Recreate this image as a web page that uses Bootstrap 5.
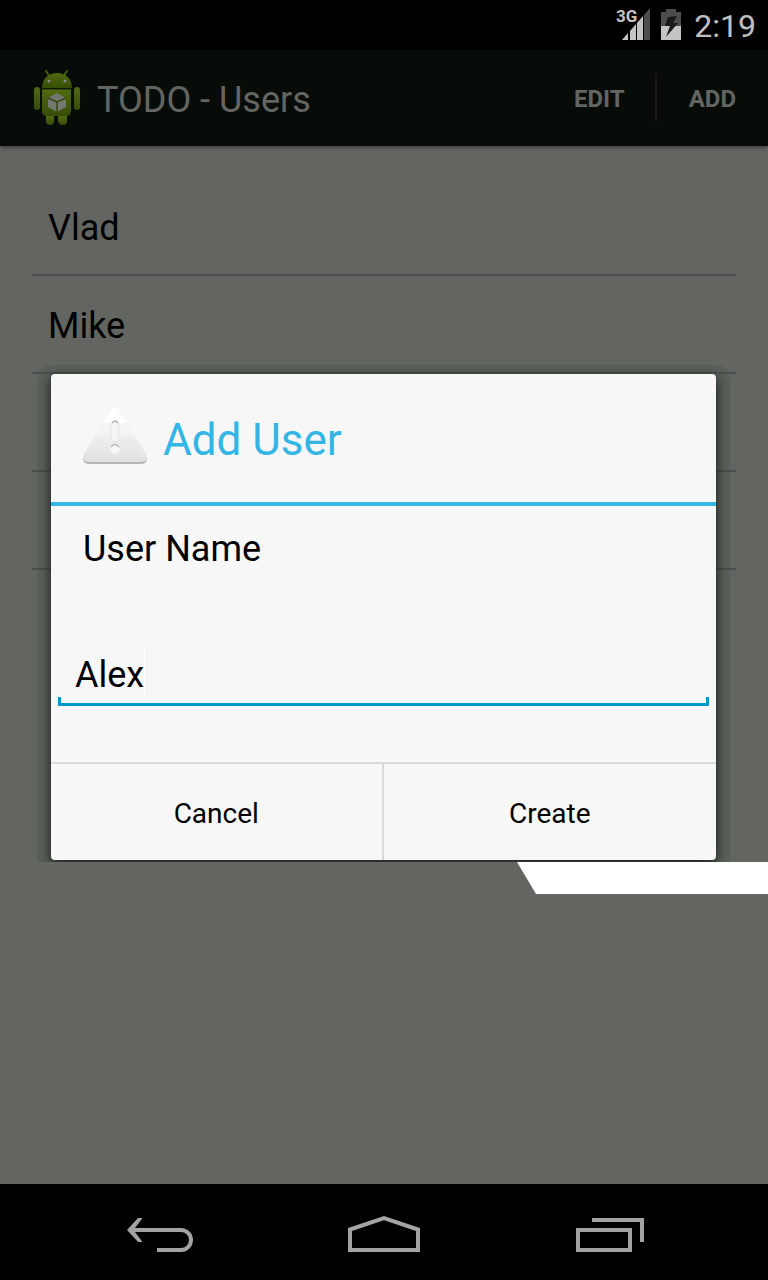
<!DOCTYPE html>
<html lang="en">
<head>
<meta charset="utf-8">
<meta name="viewport" content="width=device-width, initial-scale=1">
<title>TODO - Users</title>
<link href="https://cdn.jsdelivr.net/npm/bootstrap@5.3.0/dist/css/bootstrap.min.css" rel="stylesheet">
<style>
body { font-family: Roboto, "Liberation Sans", sans-serif; background: #636561; color: #000; }
.status-bar { background: #000; color: #c0c0c0; height: 50px; flex-shrink: 0; }
.status-time { font-size: 32px; line-height: 48px; padding-top: 1px; }
.signal-label { font: 700 17px Roboto, sans-serif; }
.action-bar { background: #080c08; height: 96px; box-shadow: 0 3px 3px -1px #444; }
.action-title { font-size: 36px; line-height: 48px; color: #636561; padding: 4px 0 0 9px; }
.action-link { color: #636561; font-size: 24px; line-height: 48px; font-weight: 700; padding: 2px 32px 0; }
.action-link:first-of-type { padding-right: 30px; }
.action-rule { width: 2px; height: 48px; background: #1a1a1a; }
.users-list { padding: 32px; }
.user-row { height: 98px; border-bottom: 2px solid #4c4e4b; padding: 4px 16px 0; font-size: 36px; }
.dialog-layer { position: absolute; inset: 0; }
.dialog-wrap { padding: 0 52px 0 51px; }
.dialog-box { background: #f7f7f7; border-radius: 4px; box-shadow: 0 4px 12px 1px #1c221c, 0 0 0 14px rgba(70, 90, 75, .3); clip-path: inset(-9px -14px -2px -14px round 14px 14px 0 0); }
.dialog-head { height: 132px; border-bottom: 4px solid #33b5e5; padding: 0 32px; gap: 16px; }
.dialog-title { font-size: 44px; line-height: 52px; color: #33b5e5; padding-top: 4px; }
.dialog-body { height: 256px; padding: 19px 7px 0; font-size: 36px; }
.name-label { line-height: 48px; padding-left: 25px; }
.name-field { display: block; width: 100%; height: 66px; margin-top: 67px; padding: 4px 17px 0; border: 0; outline: 0; color: #000;
  background: linear-gradient(#0099cc, #0099cc) bottom / 100% 3px no-repeat, linear-gradient(#0099cc, #0099cc) left bottom / 3px 9px no-repeat, linear-gradient(#0099cc, #0099cc) right bottom / 3px 9px no-repeat, linear-gradient(#fff, #fff) 86px 8px / 1px 48px no-repeat; }
.dialog-actions { border-top: 2px solid #dadada; height: 98px; }
.dialog-btn { background: none; border: 0; font-size: 28px; color: #000; padding: 4px 0 0; }
.dialog-btn:first-child { border-right: 2px solid #dadada; }
.white-strip { position: absolute; top: calc(100% + 2px); left: 517px; right: 0; height: 32px; background: #fff; clip-path: polygon(0 0, 100% 0, 100% 100%, 19px 100%); }
.soft-keys { background: #000; height: 96px; gap: 64px; padding-top: 4px; flex-shrink: 0; }
.soft-key { background: none; border: 0; padding: 0; width: 160px; }
</style>
</head>
<body>
<div class="d-flex flex-column min-vh-100">
  <header class="status-bar d-flex justify-content-end align-items-center px-2">
    <svg width="36" height="36" viewBox="0 0 36 36" role="img" aria-label="3G signal">
      <path d="M28 8 34 1V33H28z" fill="#4c4e4b"/>
      <path d="M6 33 12 26V33zM14 24 20 17V33H14zM21 16 27 9V33H21z" fill="#c4c4c4"/>
      <text x="0" y="15" class="signal-label" fill="#c4c4c4">3G</text>
    </svg>
    <svg class="mx-2" width="22" height="34" viewBox="0 0 22 34" role="img" aria-label="Battery charging">
      <path d="M6 1H16V4H21V18H1V4H6z" fill="#4c4e4b"/>
      <path d="M1 18H21V32H1z" fill="#c4c4c4"/>
      <path d="M8 9 17 8 13 15 18 15 6 29 10 18H5z" fill="#171a17"/>
    </svg>
    <span class="status-time ms-1 me-1">2:19</span>
  </header>

  <div class="flex-grow-1 position-relative d-flex flex-column">
    <nav class="action-bar d-flex align-items-center">
      <svg class="ms-4" width="64" height="64" viewBox="0 0 64 64" aria-hidden="true">
        <defs><linearGradient id="robot" x2="0" y2="1"><stop stop-color="#506b10"/><stop offset="1" stop-color="#364d08"/></linearGradient></defs>
        <path d="M22 5 26 11M43 5 39 11" stroke="#465f0e" stroke-width="2" stroke-linecap="round"/>
        <g fill="url(#robot)">
          <path d="M18 22C18 2 48 2 48 22z"/>
          <path d="M18 23H47V45Q47 50 42 50H23Q18 50 18 45z"/>
          <rect x="10" y="21" width="6" height="23" rx="3"/><rect x="50" y="21" width="6" height="23" rx="3"/>
          <path d="M22 50H30V55Q30 59 26 59T22 55zM34 50H43V55Q43 59 39 59T34 55z"/>
        </g>
        <circle cx="25" cy="15" r="1.500" fill="#858a7d"/><circle cx="41" cy="15" r="1.500" fill="#858a7d"/>
        <path d="M18 23H47" stroke="#182208"/>
        <path d="M24 32 33 27 42 32V41L33 46 24 41z" fill="#737871"/>
        <path d="M24 32 33 36 42 32M33 36V46" fill="none" stroke="#35450f" stroke-width="1.500"/>
      </svg>
      <h1 class="action-title fw-normal mb-0 me-auto">TODO - Users</h1>
      <a href="#" class="action-link text-decoration-none">EDIT</a>
      <span class="action-rule"></span>
      <a href="#" class="action-link text-decoration-none">ADD</a>
    </nav>

    <main class="users-list">
      <ul class="list-unstyled mb-0">
        <li class="user-row d-flex align-items-center">Vlad</li>
        <li class="user-row d-flex align-items-center">Mike</li>
        <li class="user-row"></li>
        <li class="user-row"></li>
      </ul>
    </main>

    <div class="dialog-layer d-flex flex-column justify-content-center">
      <div class="dialog-wrap position-relative">
        <form class="dialog-box" role="dialog" aria-labelledby="dialog-title">
          <div class="dialog-head d-flex align-items-center">
            <svg width="64" height="64" viewBox="0 0 64 64" aria-hidden="true">
              <defs><linearGradient id="warn" x2="0" y2="1"><stop offset=".28" stop-color="#fff"/><stop offset=".3" stop-color="#f7f5f7"/><stop offset=".54" stop-color="#f3f1f3"/><stop offset=".56" stop-color="#efedef"/><stop offset=".73" stop-color="#ebe9eb"/><stop offset="1" stop-color="#e3e0e3"/></linearGradient></defs>
              <path d="M1 50Q-2 58 7 58H57Q66 58 63 50z" fill="#b7b5b7"/>
              <path d="M29 3Q32-1 35 3L63 48Q66 56 57 56H7Q-2 56 1 48z" fill="url(#warn)"/>
              <rect x="28" y="15" width="8" height="21" rx="4" fill="#f5f3f5" stroke="#e5e3e5"/>
              <path d="M29 17Q32 13 35 17" fill="none" stroke="#b9b7b9" stroke-width="1.500"/>
              <circle cx="32" cy="43" r="4.500" fill="#f7f7f7"/>
              <path d="M28 41Q32 36 36 41" fill="none" stroke="#b9b7b9" stroke-width="1.500"/>
            </svg>
            <h2 class="dialog-title fw-normal mb-0" id="dialog-title">Add User</h2>
          </div>
          <div class="dialog-body">
            <label class="name-label d-block" for="user-name">User Name</label>
            <input class="name-field" id="user-name" type="text" value="Alex">
          </div>
          <div class="dialog-actions d-flex">
            <button type="button" class="dialog-btn w-50">Cancel</button>
            <button type="button" class="dialog-btn w-50">Create</button>
          </div>
        </form>
        <div class="white-strip"></div>
      </div>
    </div>
  </div>

  <footer class="soft-keys d-flex justify-content-center">
    <button type="button" class="soft-key" aria-label="Back">
      <svg width="72" height="48" viewBox="0 0 72 48" fill="none" stroke="#a3a3a3" stroke-width="4"><path d="M8 20H57A10 10 0 0 1 57 40H33"/><path d="M14 8H18.500L9.500 20 18.500 32H14L3 20z" fill="#a3a3a3" stroke="none"/></svg>
    </button>
    <button type="button" class="soft-key" aria-label="Home">
      <svg width="72" height="48" viewBox="0 0 72 48" fill="none" stroke="#a3a3a3" stroke-width="4"><path d="M2 40V19.500L36 8 70 19.500V40z"/></svg>
    </button>
    <button type="button" class="soft-key" aria-label="Recent apps">
      <svg width="72" height="48" viewBox="0 0 72 48" fill="none" stroke="#a3a3a3" stroke-width="4"><path d="M6 20H58V40H6z"/><path d="M20 10H70V32"/></svg>
    </button>
  </footer>
</div>
<script src="https://cdn.jsdelivr.net/npm/bootstrap@5.3.0/dist/js/bootstrap.bundle.min.js"></script>
</body>
</html>
